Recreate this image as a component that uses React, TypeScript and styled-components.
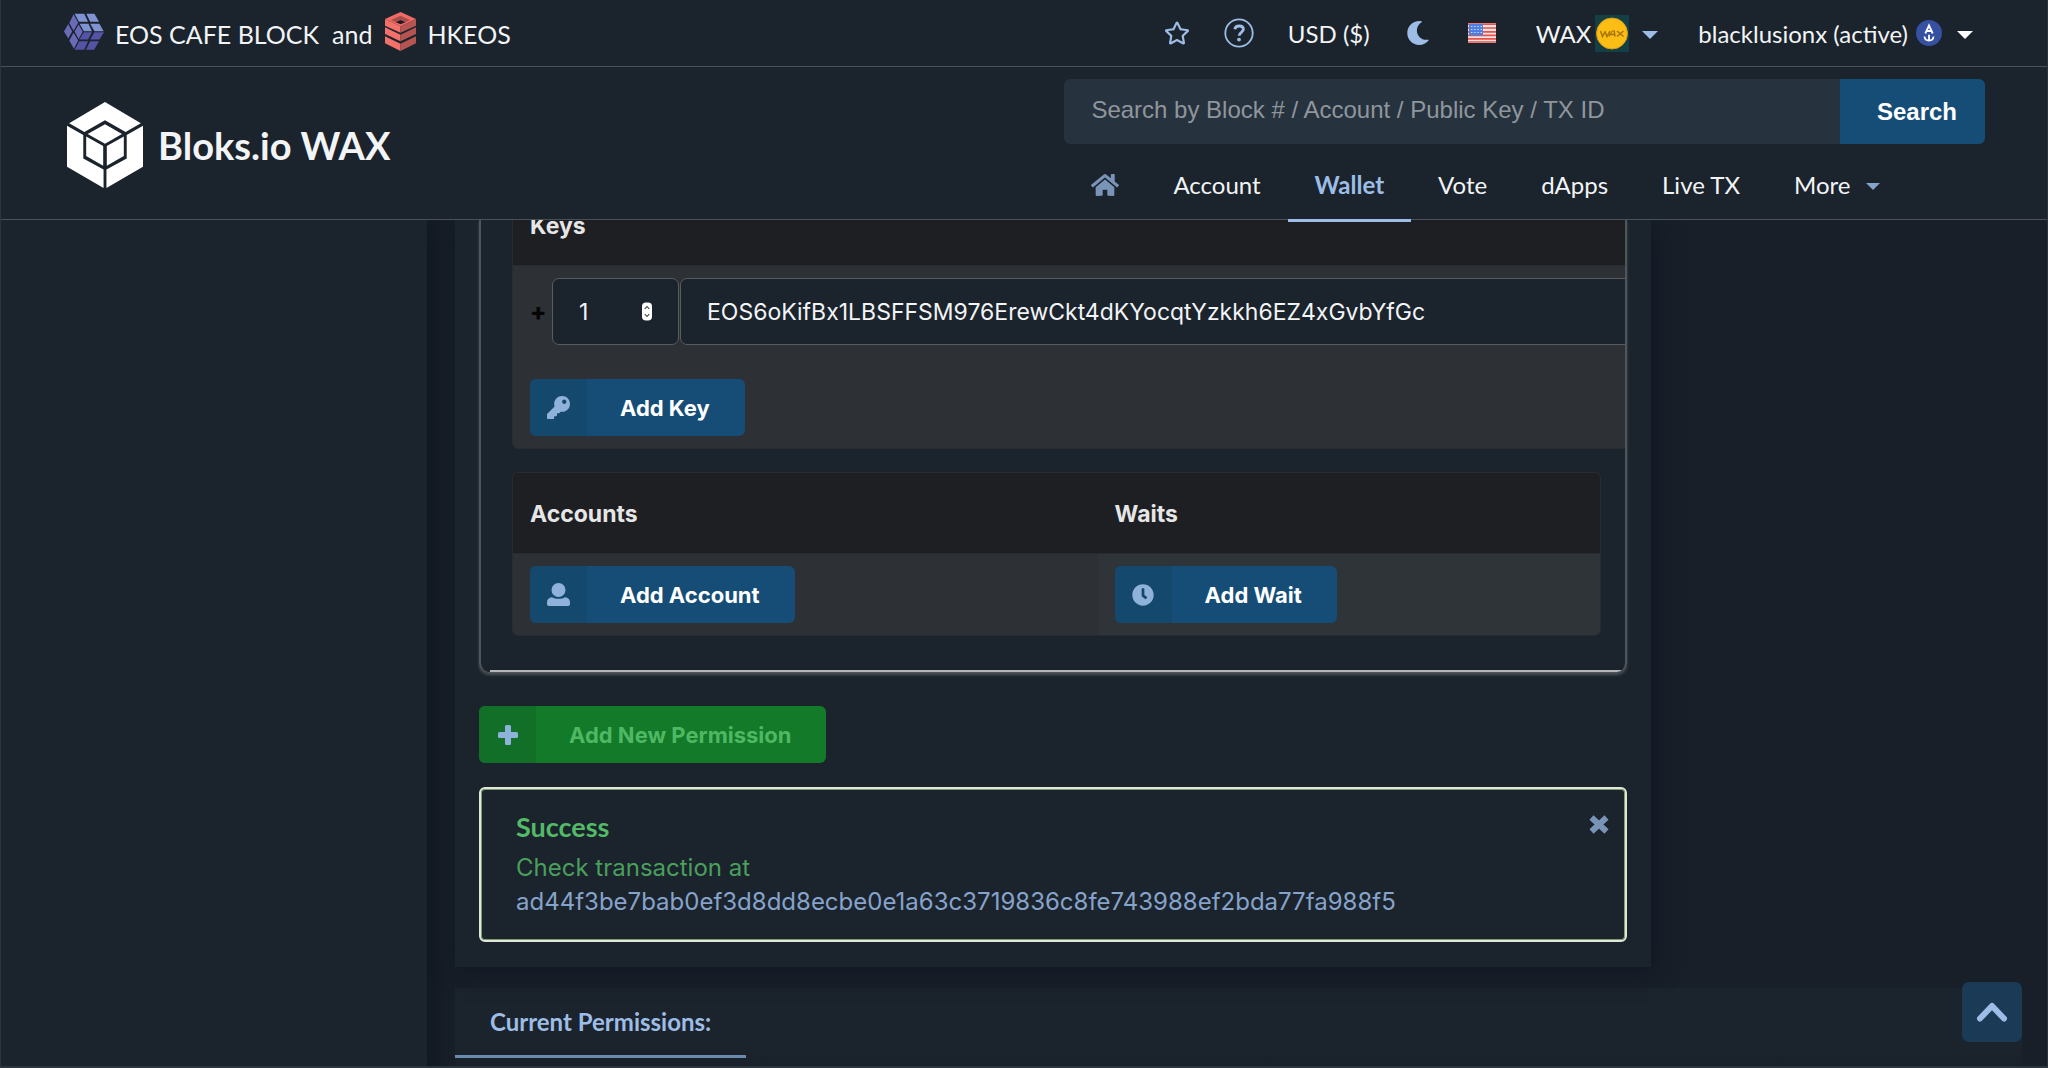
import React from 'react';
import styled, { createGlobalStyle } from 'styled-components';
import { FaClock, FaHome, FaKey, FaMoon, FaRegStar } from 'react-icons/fa';

const color = {
  page: '#181f29',
  panel: '#1b232c',
  line: '#4a5058',
  text: '#f2f4f6',
  accent: '#9dbde6',
  link: '#86a3cb',
  muted: '#7a94b8',
  blue: '#164d76',
};
const lato = "Lato, 'Open Sans', sans-serif";
const inter = "Inter, 'Liberation Sans', sans-serif";

const GlobalStyle = createGlobalStyle`
  *, *::before, *::after { box-sizing: border-box; }
  body { margin: 0; background: ${color.page}; color: ${color.text}; font-family: ${inter}; font-size: 24px; }
  a { color: inherit; text-decoration: none; }
  button { border: 0; padding: 0; background: none; color: inherit; font: inherit; cursor: pointer; }
  svg { display: block; flex: none; }
`;

const Page = styled.div`
  height: 100vh;
  display: flex;
  flex-direction: column;
  overflow: hidden;
  border: solid #2c343e;
  border-width: 0 1px 2px;
`;

/* ---------- header ---------- */
const Header = styled.header`
  position: relative;
  z-index: 5;
  flex: none;
  background: ${color.panel};
  font-family: ${lato};
`;
const TopBar = styled.div`
  display: flex;
  align-items: center;
  justify-content: space-between;
  height: 67px;
  padding: 0 74px 0 63px;
  border-bottom: 1px solid ${color.line};
`;
const Sponsors = styled.div`
  display: flex;
  align-items: center;
  gap: 13px;
  padding-bottom: 4px;
  font-size: 25px;
  line-height: 32px;
`;
const SponsorLink = styled.a`
  display: flex;
  align-items: center;
  gap: 11px;
`;
const SponsorName = styled.span`
  padding-top: 6px;
`;
const Tools = styled.div`
  display: flex;
  align-items: center;
  color: ${color.accent};
  font-size: 24px;
  line-height: 32px;
`;
const Tool = styled.button<{ $gap: number; $inner?: number }>`
  display: flex;
  align-items: center;
  gap: ${(p) => p.$inner ?? 4}px;
  margin-right: ${(p) => p.$gap}px;
`;
const ToolText = styled.span`
  padding-top: 2px;
  color: ${color.text};
`;
const Caret = styled.span<{ $size?: number; $tone?: string; $space?: number }>`
  width: 0;
  height: 0;
  margin: 4px 0 0 ${(p) => p.$space ?? 0}px;
  border: ${(p) => p.$size ?? 8}px solid transparent;
  border-top-color: ${(p) => p.$tone ?? color.accent};
  border-bottom: 0;
`;
const MainBar = styled.div`
  display: flex;
  justify-content: space-between;
  height: 153px;
  padding: 0 62px 0 66px;
  border-bottom: 1px solid ${color.line};
`;
const Brand = styled.a`
  display: flex;
  align-items: center;
  gap: 15px;
  padding-top: 4px;
  font-size: 38px;
  font-weight: 700;
  line-height: 46px;
`;
const HeaderSide = styled.div`
  display: flex;
  flex-direction: column;
  justify-content: space-between;
  width: 48%;
  padding-top: 12px;
`;
const SearchForm = styled.form`
  display: flex;
  height: 65px;
  border-radius: 6px;
  overflow: hidden;
`;
const SearchInput = styled.input`
  flex: 1;
  min-width: 0;
  padding: 0 27px 4px;
  border: 0;
  outline: 0;
  background: #27323f;
  color: ${color.text};
  font: 24px 'Liberation Sans', sans-serif;
  &::placeholder { color: #8f969c; opacity: 1; }
`;
const SearchButton = styled.button`
  width: 145px;
  padding: 1px 0 0 9px;
  background: ${color.blue};
  color: #fff;
  font: 700 24px 'Liberation Sans', sans-serif;
`;
const Nav = styled.nav`
  display: flex;
  margin-bottom: -3px;
`;
const NavLink = styled.a<{ $active?: boolean }>`
  display: flex;
  align-items: center;
  gap: 16px;
  height: 74px;
  padding: 2px 27px 0;
  border-bottom: 3px solid ${(p) => (p.$active ? color.accent : 'transparent')};
  color: ${(p) => (p.$active ? color.accent : color.text)};
  font-size: 24px;
  font-weight: ${(p) => (p.$active ? 700 : 400)};
`;

/* ---------- body ---------- */
const Body = styled.div`
  display: grid;
  grid-template-columns: 426px minmax(0, 1fr);
  flex: 1;
  min-height: 0;
`;
const Sidebar = styled.aside`
  background: ${color.panel};
  box-shadow: 4px 0 24px #10161f;
`;
const Content = styled.main`
  min-width: 0;
  padding: 0 25px 0 28px;
`;
const Card = styled.section`
  position: relative;
  width: 76.3%;
  margin-bottom: 21px;
  padding: 0 24px 25px;
  background: ${color.panel};
  box-shadow: 3px 4px 22px #101722;
`;
const Segment = styled.div`
  overflow: hidden;
  margin-bottom: 33px;
  padding-left: 31px;
  border: solid #50555a;
  border-width: 0 2px 1px;
  border-radius: 0 0 10px 10px;
  box-shadow: 0 2px 3px rgba(160, 165, 170, 0.35);
`;
const SegmentScroll = styled.div`
  height: 2px;
  margin: 34px 0 0 -22px;
  background: #b4b6b8;
`;
const Table = styled.table<{ $bleed?: boolean }>`
  width: ${(p) => (p.$bleed ? 'calc(100% + 40px)' : 'calc(100% - 24px)')};
  margin-top: ${(p) => (p.$bleed ? '-36px' : '23px')};
  border: 1px solid #282c31;
  border-spacing: 0;
  border-radius: 6px;
  overflow: hidden;
  table-layout: fixed;
  background: #2d3034;
`;
const HeadCell = styled.th<{ $width?: string }>`
  width: ${(p) => p.$width ?? 'auto'};
  height: 81px;
  padding: 1px 17px 0;
  border-bottom: 1px solid #282c31;
  background: #1e1f22;
  color: #e6e6e7;
  font-size: 23px;
  font-weight: 700;
  line-height: 32px;
  text-align: left;
`;
const Cell = styled.td<{ $tint?: boolean }>`
  padding: 12px 17px;
  background: ${(p) => (p.$tint ? '#2e3438' : 'transparent')};
`;
const KeyRow = styled.div`
  display: flex;
  align-items: center;
  gap: 1px;
  margin-bottom: 10px;
`;
const RowMark = styled.span`
  width: 21px;
  color: #050505;
  font-size: 24px;
  font-weight: 800;
`;
const Field = styled.div<{ $width?: string }>`
  display: flex;
  align-items: center;
  flex: ${(p) => (p.$width ? `0 0 ${p.$width}` : '1')};
  height: 67px;
  padding: 0 26px;
  border: 1px solid #575c61;
  border-radius: 7px;
  background: ${color.panel};
`;
const FieldInput = styled.input`
  flex: 1;
  min-width: 0;
  width: 100%;
  padding: 0;
  border: 0;
  outline: 0;
  background: transparent;
  color: ${color.text};
  font: 23px ${inter};
  appearance: textfield;
  &::-webkit-inner-spin-button { appearance: none; margin: 0; }
`;
const IconButton = styled.button<{ $green?: boolean }>`
  display: inline-flex;
  align-items: stretch;
  height: 57px;
  border-radius: 6px;
  overflow: hidden;
  vertical-align: top;
  background: ${(p) => (p.$green ? '#127a29' : color.blue)};
  color: ${(p) => (p.$green ? '#4fb863' : '#fff')};
  font-size: 22px;
  font-weight: 700;
  line-height: 58px;
`;
const IconSlot = styled.span<{ $green?: boolean }>`
  display: flex;
  align-items: center;
  justify-content: center;
  width: 57px;
  background: ${(p) => (p.$green ? '#126f28' : '#14486c')};
  color: #8fb2da;
`;
const ButtonText = styled.span`
  padding: 0 35px 0 33px;
`;
const Message = styled.div`
  display: flex;
  align-items: flex-start;
  justify-content: space-between;
  height: 155px;
  margin-top: 24px;
  padding: 22px 16px 0 35px;
  border: 2px solid #dfe8d8;
  border-radius: 6px;
  box-shadow: inset 0 0 0 1px #7f9f6f;
`;
const MessageTitle = styled.h2`
  margin: 0 0 8px;
  color: #53ba68;
  font: 700 27px/32px ${lato};
`;
const MessageText = styled.p`
  margin: 0;
  color: #4a9f5d;
  line-height: 34px;
`;
const HashLink = styled.a`
  color: ${color.link};
`;
const CloseButton = styled.button`
  padding-top: 4px;
`;
const Permissions = styled.section`
  height: 100px;
  background: linear-gradient(${color.panel} 60%, #161d26);
`;
const PermissionTab = styled.h2`
  display: inline-block;
  height: 70px;
  margin: 0;
  padding: 0 35px;
  border-bottom: 3px solid #6b8bad;
  color: ${color.accent};
  font: 700 24px/68px ${lato};
`;
const ToTop = styled.button`
  position: fixed;
  right: 26px;
  bottom: 26px;
  z-index: 6;
  display: flex;
  align-items: center;
  justify-content: center;
  width: 60px;
  height: 60px;
  border-radius: 7px;
  background: #1b3a56;
  color: ${color.accent};
`;

/* ---------- drawings ---------- */
const CafeLogo = () => (
  <svg width="40" height="37" viewBox="178 36 113 110" preserveAspectRatio="none" aria-hidden="true">
    <g fill="#7f93d2">
      <path d="M208 38h27l11 24h-26z" />
      <path d="M241 38h23l13 24h-25z" />
      <path d="M222 68h25l10 22h-23z" />
      <path d="M252 68h26l12 22h-26z" />
    </g>
    <g fill="#6a6bb8">
      <path d="M205 40l13 25-13 24-12-23z" />
      <path d="M190 69l11 22-11 21-12-21z" />
      <path d="M219 70l12 22-12 21-11-22z" />
      <path d="M205 95l13 23-12 24-13-24z" />
    </g>
    <g fill="#5553a6">
      <path d="M234 93h23l-11 22h-25z" />
      <path d="M264 93h27l-13 22h-26z" />
      <path d="M221 120h25l-11 25h-27z" />
      <path d="M252 120h25l-14 25h-23z" />
    </g>
  </svg>
);

const StackLogo = () => (
  <svg width="31" height="39" viewBox="1078 36 86 117" preserveAspectRatio="none" aria-hidden="true">
    <path fill="#f16b66" d="M1121 36l43 21-43 22-43-22z" />
    <path fill="#a94d4c" d="M1121 47l-27 13 14 7 13-7 14 7 13-7z" />
    <path fill="#1c1a20" d="M1121 60l-13 7 13 6 14-6z" />
    <g fill="#f4706a">
      <path d="M1078 57l43 22v19l-43-21z" />
      <path d="M1078 82l43 22v20l-43-22z" />
      <path d="M1078 109l43 22v22l-43-23z" />
    </g>
    <g fill="#b65452">
      <path d="M1164 57l-43 22v19l43-21z" />
      <path d="M1164 82l-43 22v20l43-22z" />
      <path d="M1164 109l-43 22v22l43-23z" />
    </g>
  </svg>
);

const CubeLogo = () => (
  <svg width="76" height="86" viewBox="190 307 210 256" preserveAspectRatio="none" fill="#fff" aria-hidden="true">
    <path d="M295 307l99 63-42 26-57-35-57 35-42-26z" />
    <path d="M190 378l45 27v70l56 33v55l-101-63z" />
    <path d="M400 378l-45 27v70l-56 33v55l101-63z" />
    <path d="M295 373l47 29-47 29-48-29z" />
    <path d="M243 410l47 28v59l-47-29z" />
    <path d="M347 410l-47 28v59l47-29z" />
  </svg>
);

const HelpIcon = () => (
  <svg width="30" height="30" viewBox="0 0 30 30" fill="none" stroke="currentColor" aria-hidden="true">
    <circle cx="15" cy="15" r="13.7" strokeWidth="1.8" />
    <path d="M10.8 11.2c.8-4.4 8.6-4.2 8.6.1 0 3-4.3 3-4.3 6.4" strokeWidth="2.8" />
    <circle cx="15" cy="21.6" r="1.9" fill="currentColor" stroke="none" />
  </svg>
);

const FlagIcon = () => (
  <svg width="28" height="20" viewBox="0 0 28 20" aria-hidden="true">
    <rect width="28" height="20" fill="#f3e3e1" />
    <path d="M0 1.2h28M0 5h28M0 8.800h28M0 12.400h28M0 15.800h28M0 19h28" stroke="#e8534c" strokeWidth="1.7" />
    <rect x="1" y="1" width="14" height="11.500" fill="#4c7fe0" />
    <path d="M3 3.500h11M3 6.500h11M3 9.500h11" stroke="#cfe0fb" strokeWidth="1.200" strokeDasharray="1.400 1.800" />
  </svg>
);

const WaxCoin = () => (
  <svg width="34" height="37" viewBox="0 0 34 37" aria-hidden="true">
    <rect width="34" height="37" fill="#143f45" />
    <circle cx="17" cy="18.500" r="15.500" fill="#fcbd14" stroke="#d89a16" />
    <path
      d="M5.500 16l2 5.500 2.500-4.500 2 4.500L15 16M14 21.500c2-4 4-6 5-5.500s0 3 1 5.500M15.500 19.500h5M22 16l6.500 5.500M28.500 16L22 21.500"
      fill="none"
      stroke="#a8740d"
      strokeWidth="1.500"
    />
  </svg>
);

const AnchorBadge = () => (
  <svg width="26" height="26" viewBox="0 0 26 26" fill="none" stroke="#fff" strokeWidth="1.800" aria-hidden="true">
    <circle cx="13" cy="13" r="13" fill="#3650a2" stroke="none" />
    <path d="M9.300 13.500L13 5.500l3.700 8M10.700 11h4.600M13 14.800v6M8.500 16.500c.5 5.400 8.500 5.400 9 0" />
  </svg>
);

const UserIcon = () => (
  <svg width="23" height="23" viewBox="0 0 23 23" fill="currentColor" aria-hidden="true">
    <circle cx="11.500" cy="7" r="7" />
    <path d="M5 14.300c3.500 2 9.500 2 13 0 3 .2 5 2.200 5 5V21c0 1.200-.8 2-2 2H2c-1.200 0-2-.8-2-2v-1.700c0-2.800 2-4.800 5-5z" />
  </svg>
);

const PlusIcon = () => (
  <svg width="20" height="20" viewBox="0 0 20 20" fill="currentColor" aria-hidden="true">
    <rect x="7" width="6" height="20" rx="1.500" />
    <rect y="7" width="20" height="6" rx="1.500" />
  </svg>
);

const SpinnerIcon = () => (
  <svg width="10" height="19" viewBox="0 0 10 18" fill="none" aria-hidden="true">
    <rect width="10" height="18" rx="4" fill="#fff" />
    <path d="M2.700 6.500L5 4l2.300 2.500M2.700 11.500L5 14l2.300-2.500" stroke="#333" strokeWidth="1.100" />
  </svg>
);

const CloseIcon = () => (
  <svg width="20" height="19" viewBox="0 0 20 19" stroke={color.muted} strokeWidth="6" strokeLinejoin="round" aria-hidden="true">
    <path d="M2.500 2.500l15 14M17.500 2.500l-15 14" />
  </svg>
);

const ChevronIcon = () => (
  <svg width="32" height="22" viewBox="0 0 32 22" fill="none" stroke="currentColor" strokeWidth="6" strokeLinecap="round" strokeLinejoin="round" aria-hidden="true">
    <path d="M4 17.500L16 5l12 12.500" />
  </svg>
);

/* ---------- page ---------- */
type ActionProps = { icon: React.ReactNode; children: React.ReactNode; green?: boolean };
const Action = ({ icon, children, green }: ActionProps) => (
  <IconButton type="button" $green={green}>
    <IconSlot $green={green}>{icon}</IconSlot>
    <ButtonText>{children}</ButtonText>
  </IconButton>
);

const navItems = ['Account', 'Wallet', 'Vote', 'dApps', 'Live TX'];

export default function App() {
  return (
    <Page>
      <GlobalStyle />
      <Header>
        <TopBar>
          <Sponsors>
            <SponsorLink href="#cafe">
              <CafeLogo />
              <SponsorName>EOS CAFE BLOCK</SponsorName>
            </SponsorLink>
            <SponsorName>and</SponsorName>
            <SponsorLink href="#hkeos">
              <StackLogo />
              <SponsorName>HKEOS</SponsorName>
            </SponsorLink>
          </Sponsors>
          <Tools>
            <Tool type="button" $gap={34} aria-label="Favorites"><FaRegStar size={26} /></Tool>
            <Tool type="button" $gap={34} aria-label="Help"><HelpIcon /></Tool>
            <Tool type="button" $gap={36}><ToolText>USD ($)</ToolText></Tool>
            <Tool type="button" $gap={38} aria-label="Dark mode"><FaMoon size={24} /></Tool>
            <Tool type="button" $gap={40} aria-label="Language"><FlagIcon /></Tool>
            <Tool type="button" $gap={40}>
              <ToolText>WAX</ToolText>
              <WaxCoin />
              <Caret $space={9} />
            </Tool>
            <Tool type="button" $gap={0} $inner={8}>
              <ToolText>blacklusionx (active)</ToolText>
              <AnchorBadge />
              <Caret $space={7} $tone="#fff" />
            </Tool>
          </Tools>
        </TopBar>
        <MainBar>
          <Brand href="#home">
            <CubeLogo />
            Bloks.io WAX
          </Brand>
          <HeaderSide>
            <SearchForm onSubmit={(e) => e.preventDefault()}>
              <SearchInput
                type="search"
                aria-label="Search"
                placeholder="Search by Block # / Account / Public Key / TX ID"
              />
              <SearchButton type="submit">Search</SearchButton>
            </SearchForm>
            <Nav>
              <NavLink href="#home" aria-label="Home"><FaHome size={28} color={color.muted} /></NavLink>
              {navItems.map((item) => (
                <NavLink key={item} href={`#${item}`} $active={item === 'Wallet'}>{item}</NavLink>
              ))}
              <NavLink href="#more">
                More
                <Caret $size={7} $tone={color.link} />
              </NavLink>
            </Nav>
          </HeaderSide>
        </MainBar>
      </Header>

      <Body>
        <Sidebar />
        <Content>
          <Card>
            <Segment>
              <Table $bleed>
                <thead>
                  <tr><HeadCell>Keys</HeadCell></tr>
                </thead>
                <tbody>
                  <tr>
                    <Cell>
                      <KeyRow>
                        <RowMark>+</RowMark>
                        <Field $width="127px">
                          <FieldInput type="number" aria-label="Key weight" defaultValue={1} />
                          <SpinnerIcon />
                        </Field>
                        <Field>
                          <FieldInput
                            type="text"
                            aria-label="Public key"
                            defaultValue="EOS6oKifBx1LBSFFSM976ErewCkt4dKYocqtYzkkh6EZ4xGvbYfGc"
                          />
                        </Field>
                      </KeyRow>
                    </Cell>
                  </tr>
                  <tr>
                    <Cell><Action icon={<FaKey size={23} />}>Add Key</Action></Cell>
                  </tr>
                </tbody>
              </Table>
              <Table>
                <thead>
                  <tr>
                    <HeadCell $width="53.8%">Accounts</HeadCell>
                    <HeadCell>Waits</HeadCell>
                  </tr>
                </thead>
                <tbody>
                  <tr>
                    <Cell><Action icon={<UserIcon />}>Add Account</Action></Cell>
                    <Cell $tint><Action icon={<FaClock size={22} />}>Add Wait</Action></Cell>
                  </tr>
                </tbody>
              </Table>
              <SegmentScroll />
            </Segment>
            <Action green icon={<PlusIcon />}>Add New Permission</Action>
            <Message role="status">
              <div>
                <MessageTitle>Success</MessageTitle>
                <MessageText>Check transaction at</MessageText>
                <MessageText>
                  <HashLink href="#tx">ad44f3be7bab0ef3d8dd8ecbe0e1a63c3719836c8fe743988ef2bda77fa988f5</HashLink>
                </MessageText>
              </div>
              <CloseButton type="button" aria-label="Close"><CloseIcon /></CloseButton>
            </Message>
          </Card>
          <Permissions>
            <PermissionTab>Current Permissions:</PermissionTab>
          </Permissions>
        </Content>
      </Body>
      <ToTop type="button" aria-label="Back to top"><ChevronIcon /></ToTop>
    </Page>
  );
}
